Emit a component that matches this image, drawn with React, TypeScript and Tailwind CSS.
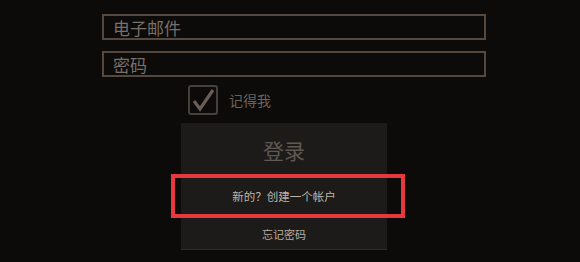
import React from "react";

const font = { fontFamily: '"Noto Sans CJK SC", "Noto Sans", sans-serif' };

export default function App() {
  return (
    <div
      className="relative w-[580px] h-[262px] overflow-hidden bg-[#0c0b0a]"
      style={font}
    >
      <div className="flex flex-col pt-[14px]">
        <div className="ml-[102px] w-[384px] flex flex-col gap-[11px]">
          <div className="h-[26px] border-2 border-[#54483f] flex items-center pl-[9px] text-[17px] leading-none text-[#786f68]">
            电子邮件
          </div>
          <div className="h-[26px] border-2 border-[#54483f] flex items-center pl-[9px] text-[17px] leading-none text-[#786f68]">
            密码
          </div>
        </div>
        <div className="ml-[188px] mt-[8px] flex items-center gap-[11px]">
          <div className="w-[30px] h-[30px] rounded-[3px] border-2 border-[#46403a] flex items-center justify-center">
            <svg width="24" height="24" viewBox="0 0 24 24">
              <path
                d="M3 13 L9 21 L22 2"
                fill="none"
                stroke="#6a5d55"
                strokeWidth="3.2"
                strokeLinejoin="miter"
              />
            </svg>
          </div>
          <span className="text-[14px] leading-none text-[#6a625b]">记得我</span>
        </div>
        <div className="ml-[181px] mt-[8px] w-[206px] h-[127px] bg-[#1d1b19] flex flex-col border-b border-[#2c2926]">
          <div className="h-[54px] flex items-center justify-center text-[21px] leading-none text-[#5f5851]">
            登录
          </div>
          <div className="h-[40px] flex items-center justify-center text-[11.5px] leading-none text-[#bdb3a9]">
            新的？创建一个帐户
          </div>
          <div className="flex-1 flex items-center justify-center text-[11px] leading-none text-[#b5aba2] pt-[2px]">
            忘记密码
          </div>
        </div>
      </div>
      <div className="absolute left-[171px] top-[174px] w-[234px] h-[44px] border-4 border-[#e8383d]" />
    </div>
  );
}
